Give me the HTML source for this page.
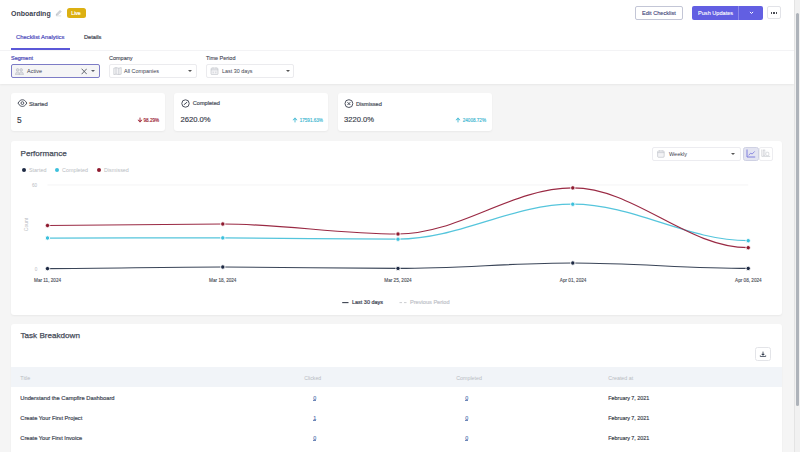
<!DOCTYPE html>
<html><head><meta charset="utf-8">
<style>
*{margin:0;padding:0;box-sizing:border-box}
html,body{width:800px;height:452px;overflow:hidden;background:#f5f5f5;font-family:"Liberation Sans",sans-serif;color:#3c4250}
.a{position:absolute;white-space:nowrap;line-height:1}
.sb{-webkit-text-stroke-width:0.2px}
#hdr{position:absolute;left:0;top:0;width:794px;height:84px;background:#fff;box-shadow:0 1px 2px rgba(0,0,0,0.06)}
.btn{position:absolute;border-radius:2px}
.card{position:absolute;background:#fff;border-radius:3px;box-shadow:0 1px 2px rgba(0,0,0,0.05)}
.sel{position:absolute;top:64px;height:14px;border:1px solid #ebebee;border-radius:2px;background:#fff}
.lbl{position:absolute;top:56px;font-size:5.5px;color:#3f4450;white-space:nowrap;line-height:1;-webkit-text-stroke-width:0.1px}
.caret{position:absolute;width:0;height:0;border-left:2px solid transparent;border-right:2px solid transparent;border-top:2px solid #555}
#sb{position:absolute;left:794px;top:0;width:6px;height:452px;background:#f1f1f1;border-left:1px solid #e4e4e4}
#thumb{position:absolute;left:795.6px;top:13px;width:3.4px;height:393px;background:#aeb3ba;border-radius:2px}
</style></head>
<body>
<div id="hdr">
  <div class="a" style="left:11px;top:9.5px;font-size:7px;font-weight:bold;color:#3d4350">Onboarding</div>
  <svg class="a" style="left:55px;top:9px" width="8" height="8" viewBox="0 0 8 8"><path d="M1.2 6.3 L1.5 5 L5 1.5 L6.1 2.6 L2.6 6.1 Z" fill="#d9dbdf" stroke="#a6a9b0" stroke-width="0.55" stroke-linejoin="round"/><path d="M1.2 6.9 H6.2" stroke="#c4c6cb" stroke-width="0.5"/></svg>
  <div class="btn" style="left:66.5px;top:8px;width:19px;height:9.5px;background:#dcb012;border-radius:2.5px"></div>
  <div class="a sb" style="left:71.3px;top:10.9px;font-size:5.1px;color:#fff">Live</div>

  <div class="btn" style="left:635px;top:6px;width:48px;height:14px;border:0.9px solid #c3c6d6;background:#fff"></div>
  <div class="a" style="left:642px;top:11px;font-size:5.6px;color:#43477a;-webkit-text-stroke-width:0.12px">Edit Checklist</div>
  <div class="btn" style="left:692px;top:6px;width:71px;height:13.7px;background:#625fe2"></div>
  <div class="a" style="left:738px;top:6px;width:0.6px;height:13.7px;background:#8b88ea"></div>
  <div class="a" style="left:698px;top:10.8px;font-size:5.6px;color:#fff;-webkit-text-stroke-width:0.1px">Push Updates</div>
  <svg class="a" style="left:749px;top:11px" width="5" height="4" viewBox="0 0 5 4"><path d="M0.9 0.9 L2.5 2.5 L4.1 0.9" fill="none" stroke="#fff" stroke-width="1"/></svg>
  <div class="btn" style="left:767px;top:6.4px;width:14px;height:13px;border:1px solid #e2e3e8;background:#fff"></div>
  <div class="a" style="left:770.9px;top:12.4px;width:1.4px;height:1.4px;background:#4a4d55"></div>
  <div class="a" style="left:773.2px;top:12.4px;width:1.4px;height:1.4px;background:#4a4d55"></div>
  <div class="a" style="left:775.5px;top:12.4px;width:1.4px;height:1.4px;background:#4a4d55"></div>

  <div class="a sb" style="left:16px;top:34.6px;font-size:5.85px;color:#4f4dbd">Checklist Analytics</div>
  <div class="a sb" style="left:84px;top:34.5px;font-size:5.65px;color:#3d4350">Details</div>
  <div class="a" style="left:11px;top:48px;width:59px;height:1.7px;background:#5b58d8"></div>
  <div class="a" style="left:0;top:49.5px;width:794px;height:0.6px;background:#f3f3f5"></div>

  <div class="lbl" style="left:11px;color:#4e4cb8;-webkit-text-stroke-width:0.22px">Segment</div>
  <div class="lbl" style="left:109px">Company</div>
  <div class="lbl" style="left:206px">Time Period</div>

  <div class="sel" style="left:11px;width:88.5px;border:1px solid #7d7cc6;background:#f5f5f6"></div>
  <div class="a" style="left:27px;top:68.5px;font-size:5.5px;color:#3d4350">Active</div>
  <div class="sel" style="left:108.5px;width:88px"></div>
  <div class="a" style="left:124px;top:68.5px;font-size:5.45px;color:#3d4350">All Companies</div>
  <div class="sel" style="left:206.2px;width:88px"></div>
  <div class="a" style="left:222px;top:68.5px;font-size:5.4px;color:#3d4350">Last 30 days</div>

  <!-- select icons -->
  <svg class="a" style="left:15px;top:67.8px" width="9" height="7.5" viewBox="0 0 9 7.5"><g fill="#dcdee3" stroke="#b3b6bd" stroke-width="0.55"><circle cx="2.6" cy="1.9" r="1.3"/><circle cx="6.2" cy="1.9" r="1.3"/><path d="M0.5 6.8 C0.5 4.6 1.4 3.9 2.6 3.9 C3.8 3.9 4.5 4.6 4.5 6.8 Z"/><path d="M4.2 6.8 C4.2 4.6 5 3.9 6.2 3.9 C7.4 3.9 8.4 4.6 8.4 6.8 Z"/></g></svg>
  <svg class="a" style="left:80.5px;top:67.5px" width="6.5" height="7" viewBox="0 0 6.5 7"><path d="M0.6 0.7 L5.8 6.2 M5.8 0.7 L0.6 6.2" stroke="#4a4f5a" stroke-width="0.85"/></svg>
  <div class="caret" style="left:91px;top:70.3px;border-top-color:#5a5e68"></div>
  <svg class="a" style="left:113px;top:67px" width="9" height="8" viewBox="0 0 9 8"><path d="M0.8 1.2 L3 0.6 L5.8 1.2 L8.2 0.6 V7.2 L5.8 7.6 L3 7.2 L0.8 7.6 Z M3 0.6 V7.2 M5.8 1.2 V7.6" fill="#f3f3f5" stroke="#b3b7be" stroke-width="0.55"/></svg>
  <div class="caret" style="left:188px;top:70.3px"></div>
  <svg class="a" style="left:210px;top:67px" width="9" height="8" viewBox="0 0 9 8"><rect x="1" y="1" width="7" height="6.6" rx="1" fill="#f3f3f5" stroke="#b3b7be" stroke-width="0.55"/><path d="M1 2.8 H8 M3 0.4 V1.6 M6 0.4 V1.6 M3.2 4.6 V6.3 M5.8 4.6 V6.3" stroke="#b3b7be" stroke-width="0.5"/></svg>
  <div class="caret" style="left:285.5px;top:70.3px"></div>
</div>


<!-- stat cards -->
<div class="card" style="left:11px;top:93px;width:154px;height:38.3px"></div>
<div class="card" style="left:174px;top:93px;width:154px;height:38.3px"></div>
<div class="card" style="left:337.5px;top:93px;width:154.3px;height:38.3px"></div>

<svg class="a" style="left:16.5px;top:99.3px" width="11" height="8.5" viewBox="0 0 11 8.5"><path d="M1 4.1 C2.6 1.4 4 0.8 5.4 0.8 C6.8 0.8 8.2 1.4 9.8 4.1 C8.2 6.8 6.8 7.4 5.4 7.4 C4 7.4 2.6 6.8 1 4.1 Z" fill="none" stroke="#444a57" stroke-width="1.0"/><circle cx="5.4" cy="4.1" r="1.4" fill="none" stroke="#444a57" stroke-width="0.9"/></svg>
<div class="a sb" style="left:29px;top:101.5px;font-size:5.8px;color:#4c515d">Started</div>
<div class="a" style="left:17px;top:116.3px;font-size:8.4px;color:#383d4a;-webkit-text-stroke-width:0.15px">5</div>
<svg class="a" style="left:136.5px;top:117px" width="6" height="6" viewBox="0 0 6 6"><path d="M3 0.6 V3.5" stroke="#9b1c31" stroke-width="0.9"/><path d="M0.9 2.9 L3 5.2 L5.1 2.9 L3 3.9 Z" fill="#9b1c31" stroke="#9b1c31" stroke-width="0.5" stroke-linejoin="round"/></svg>
<div class="a" style="left:143.5px;top:118.7px;font-size:4.6px;color:#9b1c31;-webkit-text-stroke-width:0.15px">98.29%</div>

<svg class="a" style="left:180.5px;top:99px" width="9" height="9" viewBox="0 0 9 9"><circle cx="4.5" cy="4.5" r="3.7" fill="none" stroke="#444a57" stroke-width="0.95"/><path d="M3.1 5.6 L5.9 3.3" stroke="#444a57" stroke-width="1.0" stroke-linecap="round"/></svg>
<div class="a sb" style="left:192.8px;top:101.4px;font-size:5.6px;color:#4c515d">Completed</div>
<div class="a" style="left:180.5px;top:116.3px;font-size:7.65px;color:#383d4a;-webkit-text-stroke-width:0.15px">2620.0%</div>
<svg class="a" style="left:292.2px;top:117px" width="6" height="6" viewBox="0 0 6 6"><path d="M3 5.4 V2.5" stroke="#3fb8d2" stroke-width="0.9"/><path d="M0.9 3.1 L3 0.8 L5.1 3.1 L3 2.1 Z" fill="#3fb8d2" stroke="#3fb8d2" stroke-width="0.5" stroke-linejoin="round"/></svg>
<div class="a" style="left:299.7px;top:118.7px;font-size:4.6px;color:#3fb8d2;-webkit-text-stroke-width:0.15px">17591.63%</div>

<svg class="a" style="left:343.5px;top:99px" width="10" height="10" viewBox="0 0 10 10"><circle cx="4.9" cy="4.6" r="3.9" fill="none" stroke="#444a57" stroke-width="0.95"/><path d="M3.5 3.2 L6.3 6 M6.3 3.2 L3.5 6" stroke="#444a57" stroke-width="1.0"/></svg>
<div class="a sb" style="left:356px;top:101.5px;font-size:5.6px;color:#4c515d">Dismissed</div>
<div class="a" style="left:344px;top:116.3px;font-size:7.6px;color:#383d4a;-webkit-text-stroke-width:0.15px">3220.0%</div>
<svg class="a" style="left:455.3px;top:117px" width="6" height="6" viewBox="0 0 6 6"><path d="M3 5.4 V2.5" stroke="#3fb8d2" stroke-width="0.9"/><path d="M0.9 3.1 L3 0.8 L5.1 3.1 L3 2.1 Z" fill="#3fb8d2" stroke="#3fb8d2" stroke-width="0.5" stroke-linejoin="round"/></svg>
<div class="a" style="left:462.7px;top:118.7px;font-size:4.62px;color:#3fb8d2;-webkit-text-stroke-width:0.15px">24008.72%</div>

<!-- performance -->
<div class="card" style="left:11px;top:141px;width:771px;height:174px"></div>
<div class="a sb" style="left:20.5px;top:149.8px;font-size:8.1px;color:#454b58;-webkit-text-stroke-width:0.25px">Performance</div>
<div class="a" style="left:22px;top:168px;width:4px;height:4px;border-radius:50%;background:#1e2a44"></div>
<div class="a" style="left:29px;top:167.5px;font-size:5.4px;color:#b9bcc2">Started</div>
<div class="a" style="left:55px;top:168px;width:4px;height:4px;border-radius:50%;background:#3cc0dc"></div>
<div class="a" style="left:62px;top:167.5px;font-size:5.4px;color:#b9bcc2">Completed</div>
<div class="a" style="left:97px;top:168px;width:4px;height:4px;border-radius:50%;background:#8e1a2f"></div>
<div class="a" style="left:104px;top:167.5px;font-size:5.4px;color:#b9bcc2">Dismissed</div>

<div class="sel" style="left:652.4px;top:146.6px;width:88.4px;height:14px;border-color:#ececf0"></div>
<svg class="a" style="left:656.5px;top:149.5px" width="8" height="8" viewBox="0 0 8 8"><rect x="0.6" y="0.9" width="6.6" height="6.4" rx="1" fill="#f3f3f5" stroke="#b3b7be" stroke-width="0.55"/><path d="M0.6 2.6 H7.2 M2.6 0.3 V1.5 M5.2 0.3 V1.5" stroke="#b3b7be" stroke-width="0.5"/></svg>
<div class="a" style="left:669px;top:151.7px;font-size:5.5px;color:#3d4350">Weekly</div>
<div class="caret" style="left:730.5px;top:153px"></div>
<div class="a" style="left:743.4px;top:146.6px;width:15.8px;height:14.1px;background:#e3e4f1;border:0.8px solid #cfd1e3;border-radius:2.5px"></div>
<svg class="a" style="left:746px;top:149px" width="11" height="9" viewBox="0 0 11 9"><path d="M1 0.5 V8 H9.2" fill="none" stroke="#5e5bd6" stroke-width="0.75"/><path d="M2.6 6.4 L4.6 4.2 L6.2 5 L8.7 2.4" fill="none" stroke="#5e5bd6" stroke-width="0.65"/></svg>
<div class="a" style="left:759.2px;top:146.6px;width:13.6px;height:14.1px;border:1px solid #ededf0;border-radius:2px;background:#fff"></div>
<svg class="a" style="left:760.5px;top:149.3px" width="10" height="9" viewBox="0 0 10 9"><path d="M0.8 0.5 V7.4 H9.2" fill="none" stroke="#bfc2c8" stroke-width="0.6"/><rect x="2.2" y="1" width="1.7" height="5.7" fill="none" stroke="#bfc2c8" stroke-width="0.55"/><rect x="4.9" y="3.2" width="2.9" height="3.5" rx="0.8" fill="none" stroke="#bfc2c8" stroke-width="0.55"/></svg>

<svg class="a" style="left:0;top:0" width="800" height="452" viewBox="0 0 800 452">
  <line x1="47.5" y1="185" x2="748.2" y2="185" stroke="#ececee" stroke-width="0.6"/>
  <text x="37.2" y="187.1" font-size="4.6" fill="#b8bbc2" text-anchor="end" font-family="Liberation Sans">60</text>
  <text x="37.2" y="270.7" font-size="4.6" fill="#b8bbc2" text-anchor="end" font-family="Liberation Sans">0</text>
  <text transform="translate(28.2 224.5) rotate(-90)" font-size="5" fill="#b8bbc2" text-anchor="middle" font-family="Liberation Sans">Count</text>
  <path d="M47.5 268.6 C108.9 268.6 161.4 267.0 222.8 267.0 C284.1 267.0 336.7 268.4 398.0 268.4 C459.2 268.4 511.6 263.0 572.8 263.0 C634.2 263.0 686.8 268.4 748.2 268.4" fill="none" stroke="#3a4558" stroke-width="1.15"/>
  <path d="M47.5 238.0 C108.9 238.0 161.4 237.9 222.8 237.9 C284.1 237.9 336.7 239.2 398.0 239.2 C459.2 239.2 511.6 204.2 572.8 204.2 C634.2 204.2 686.8 240.7 748.2 240.7" fill="none" stroke="#55c5dc" stroke-width="1.25"/>
  <path d="M47.5 225.5 C108.9 225.5 161.4 224.0 222.8 224.0 C284.1 224.0 336.7 234.0 398.0 234.0 C459.2 234.0 511.6 187.9 572.8 187.9 C634.2 187.9 686.8 247.7 748.2 247.7" fill="none" stroke="#9a2a44" stroke-width="1.2"/>
  <g stroke="#fff" stroke-width="0.9">
   <circle cx="47.5" cy="225.5" r="2.2" fill="#8e1a2f"/><circle cx="222.8" cy="224.0" r="2.2" fill="#8e1a2f"/><circle cx="398" cy="234" r="2.2" fill="#8e1a2f"/><circle cx="572.8" cy="187.9" r="2.2" fill="#8e1a2f"/><circle cx="748.2" cy="247.7" r="2.2" fill="#8e1a2f"/>
   <circle cx="47.5" cy="238" r="2.2" fill="#3cc0dc"/><circle cx="222.8" cy="237.9" r="2.2" fill="#3cc0dc"/><circle cx="398" cy="239.2" r="2.2" fill="#3cc0dc"/><circle cx="572.8" cy="204.2" r="2.2" fill="#3cc0dc"/><circle cx="748.2" cy="240.7" r="2.2" fill="#3cc0dc"/>
   <circle cx="47.5" cy="268.6" r="2.2" fill="#1e2a44"/><circle cx="222.8" cy="267" r="2.2" fill="#1e2a44"/><circle cx="398" cy="268.4" r="2.2" fill="#1e2a44"/><circle cx="572.8" cy="263" r="2.2" fill="#1e2a44"/><circle cx="748.2" cy="268.4" r="2.2" fill="#1e2a44"/>
  </g>
  <g font-size="4.65" fill="#4c5059" stroke="#4c5059" stroke-width="0.12" text-anchor="middle" font-family="Liberation Sans">
   <text x="47.6" y="281.7">Mar 11, 2024</text><text x="222.8" y="281.7">Mar 18, 2024</text><text x="398" y="281.7">Mar 25, 2024</text><text x="573.1" y="281.7">Apr 01, 2024</text><text x="748.4" y="281.7">Apr 08, 2024</text>
  </g>
  <line x1="342.2" y1="302.6" x2="348.5" y2="302.6" stroke="#3c4250" stroke-width="1.1"/>
  <line x1="399.5" y1="302.6" x2="407" y2="302.6" stroke="#c5c7cc" stroke-width="0.9" stroke-dasharray="2.5 2"/>
</svg>
<div class="a sb" style="left:352px;top:299.6px;font-size:5.47px;color:#3c4250">Last 30 days</div>
<div class="a sb" style="left:410px;top:299.6px;font-size:5.62px;color:#c3c5cb">Previous Period</div>

<!-- task breakdown -->
<div class="card" style="left:11px;top:324px;width:771px;height:140px"></div>
<div class="a sb" style="left:20.5px;top:332px;font-size:8.1px;color:#454b58;-webkit-text-stroke-width:0.25px">Task Breakdown</div>
<div class="a" style="left:755px;top:347.3px;width:15.5px;height:13.6px;border:0.9px solid #e3e4e8;border-radius:2.5px;background:#fff"></div>
<svg class="a" style="left:758.8px;top:351px" width="8" height="7" viewBox="0 0 8 7"><path d="M4 0.6 V4" stroke="#2e3748" stroke-width="0.8"/><path d="M2.6 3 L4 4.5 L5.4 3 Z" fill="#2e3748" stroke="#2e3748" stroke-width="0.4"/><path d="M1.3 4.4 L1.3 5.5 H6.7 V4.4" fill="none" stroke="#2e3748" stroke-width="0.75"/></svg>
<div class="a" style="left:11px;top:367.1px;width:771px;height:20.4px;background:#f1f4f8"></div>
<div class="a" style="left:20.3px;top:375.8px;font-size:5.4px;color:#b8bbc2">Title</div>
<div class="a" style="left:304.2px;top:375.8px;font-size:5.2px;color:#b8bbc2">Clicked</div>
<div class="a" style="left:456.3px;top:375.8px;font-size:5.3px;color:#b8bbc2">Completed</div>
<div class="a" style="left:608.3px;top:375.8px;font-size:5.35px;color:#b8bbc2">Created at</div>

<div class="a" style="left:20.3px;top:395.8px;font-size:5.78px;color:#454b58;-webkit-text-stroke-width:0.2px">Understand the Campfire Dashboard</div>
<div class="a" style="left:20.3px;top:415.8px;font-size:5.69px;color:#454b58;-webkit-text-stroke-width:0.2px">Create Your First Project</div>
<div class="a" style="left:20.3px;top:435.9px;font-size:5.66px;color:#454b58;-webkit-text-stroke-width:0.2px">Create Your First Invoice</div>
<div class="a" style="left:313.3px;top:395.5px;font-size:5.4px;color:#4f70ad;-webkit-text-stroke-width:0.12px">0</div><div class="a" style="left:313.3px;top:400.0px;width:3.1px;height:0.55px;background:#6d87b8"></div>
<div class="a" style="left:313.3px;top:415.5px;font-size:5.4px;color:#4f70ad;-webkit-text-stroke-width:0.12px">1</div><div class="a" style="left:313.3px;top:420.0px;width:3.1px;height:0.55px;background:#6d87b8"></div>
<div class="a" style="left:313.3px;top:435.5px;font-size:5.4px;color:#4f70ad;-webkit-text-stroke-width:0.12px">0</div><div class="a" style="left:313.3px;top:440.0px;width:3.1px;height:0.55px;background:#6d87b8"></div>
<div class="a" style="left:465.3px;top:395.5px;font-size:5.4px;color:#4f70ad;-webkit-text-stroke-width:0.12px">0</div><div class="a" style="left:465.3px;top:400.0px;width:3.1px;height:0.55px;background:#6d87b8"></div>
<div class="a" style="left:465.3px;top:415.5px;font-size:5.4px;color:#4f70ad;-webkit-text-stroke-width:0.12px">0</div><div class="a" style="left:465.3px;top:420.0px;width:3.1px;height:0.55px;background:#6d87b8"></div>
<div class="a" style="left:465.3px;top:435.5px;font-size:5.4px;color:#4f70ad;-webkit-text-stroke-width:0.12px">0</div><div class="a" style="left:465.3px;top:440.0px;width:3.1px;height:0.55px;background:#6d87b8"></div>
<div class="a" style="left:608.3px;top:395.8px;font-size:5.4px;color:#373c48;-webkit-text-stroke-width:0.15px">February 7, 2021</div>
<div class="a" style="left:608.3px;top:415.8px;font-size:5.4px;color:#373c48;-webkit-text-stroke-width:0.15px">February 7, 2021</div>
<div class="a" style="left:608.3px;top:435.9px;font-size:5.4px;color:#373c48;-webkit-text-stroke-width:0.15px">February 7, 2021</div>

<div id="sb"></div><div id="thumb"></div>
</body></html>
